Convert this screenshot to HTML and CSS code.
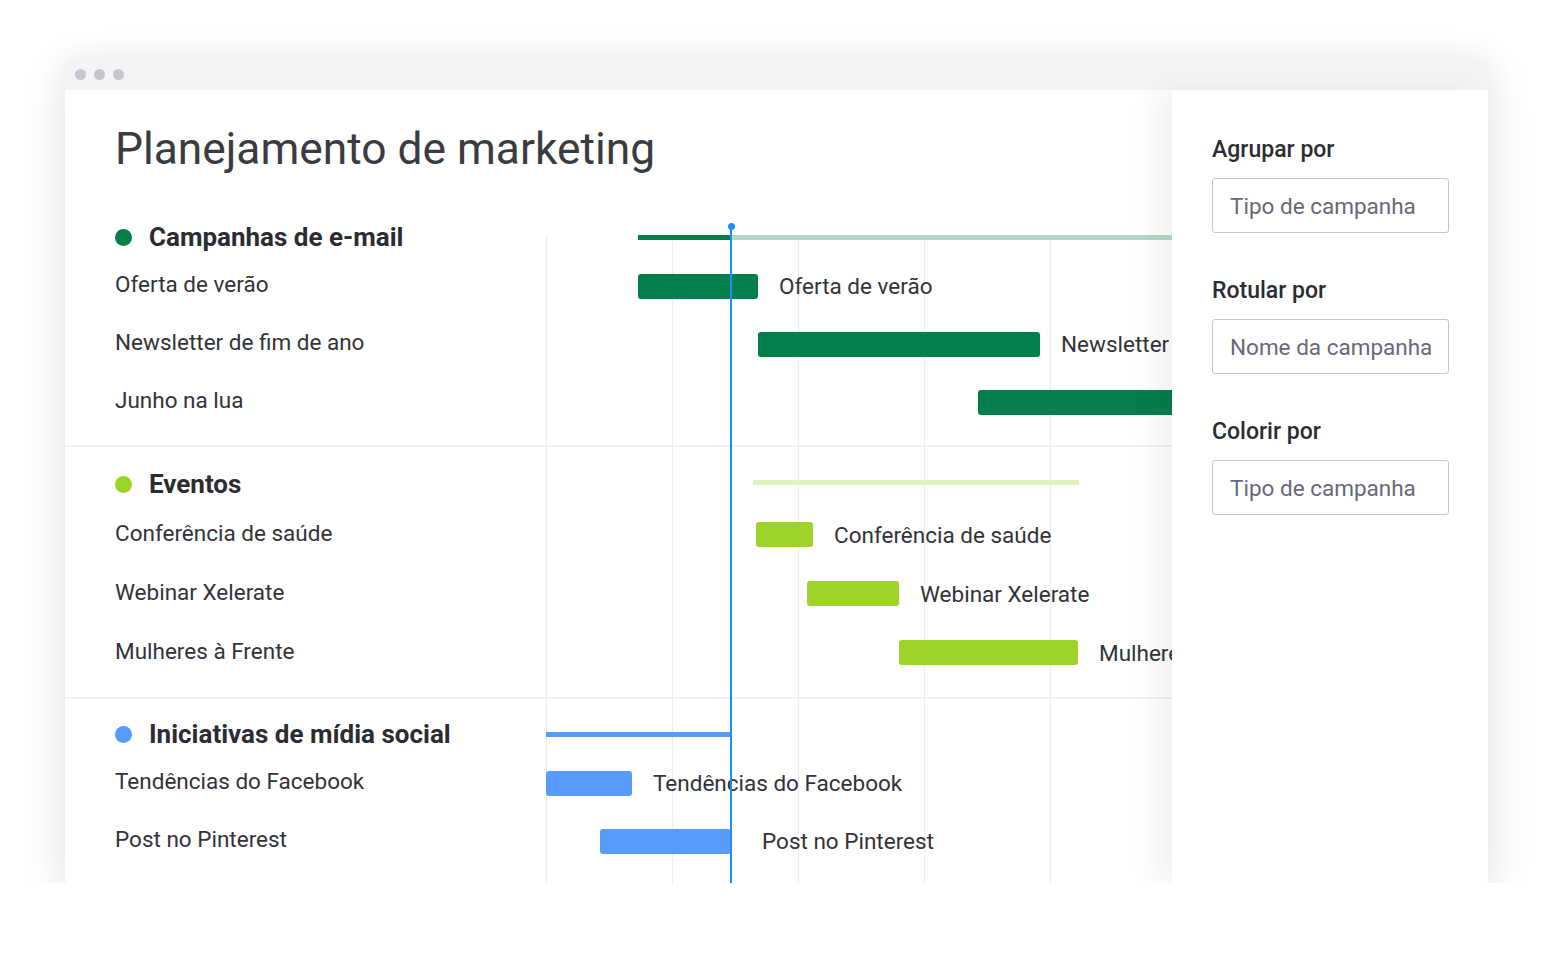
FILE: index.html
```html
<!DOCTYPE html>
<html lang="pt">
<head>
<meta charset="utf-8">
<title>Planejamento de marketing</title>
<link rel="stylesheet" href="styles.css">
</head>
<body>
<div class="card">
  <div class="topbar"><span class="wdot"></span><span class="wdot"></span><span class="wdot"></span></div>
  <div class="body">
    <main class="main">
      <h1 class="title">Planejamento de marketing</h1>
      <div class="chart">
        <div class="grid"></div>
        <div class="today"></div>

        <section class="group g-email">
          <div class="row header">
            <div class="name"><span class="gdot c-green"></span>Campanhas de e-mail</div>
            <div class="track">
              <div class="summary" style="margin-left:92px">
                <span class="seg c-green" style="width:93px"></span><span class="seg c-green-light" style="width:460px"></span>
              </div>
            </div>
          </div>
          <div class="row item">
            <div class="name">Oferta de verão</div>
            <div class="track"><div class="task" style="margin-left:92px"><span class="bar c-green" style="width:120px"></span><span class="tlabel">Oferta de verão</span></div></div>
          </div>
          <div class="row item">
            <div class="name">Newsletter de fim de ano</div>
            <div class="track"><div class="task" style="margin-left:212px"><span class="bar c-green" style="width:282px"></span><span class="tlabel">Newsletter de fim de ano</span></div></div>
          </div>
          <div class="row item">
            <div class="name">Junho na lua</div>
            <div class="track"><div class="task" style="margin-left:432px"><span class="bar c-green" style="width:250px"></span><span class="tlabel">Junho na lua</span></div></div>
          </div>
        </section>

        <section class="group g-events">
          <div class="row header">
            <div class="name"><span class="gdot c-lime"></span>Eventos</div>
            <div class="track">
              <div class="summary" style="margin-left:207px">
                <span class="seg c-lime-light" style="width:326px"></span>
              </div>
            </div>
          </div>
          <div class="row item">
            <div class="name">Conferência de saúde</div>
            <div class="track"><div class="task" style="margin-left:210px"><span class="bar c-lime" style="width:57px"></span><span class="tlabel">Conferência de saúde</span></div></div>
          </div>
          <div class="row item">
            <div class="name">Webinar Xelerate</div>
            <div class="track"><div class="task" style="margin-left:261px"><span class="bar c-lime" style="width:92px"></span><span class="tlabel">Webinar Xelerate</span></div></div>
          </div>
          <div class="row item">
            <div class="name">Mulheres à Frente</div>
            <div class="track"><div class="task" style="margin-left:353px"><span class="bar c-lime" style="width:179px"></span><span class="tlabel">Mulheres à Frente</span></div></div>
          </div>
        </section>

        <section class="group g-social">
          <div class="row header">
            <div class="name"><span class="gdot c-blue"></span>Iniciativas de mídia social</div>
            <div class="track">
              <div class="summary" style="margin-left:0px">
                <span class="seg c-blue" style="width:185px"></span>
              </div>
            </div>
          </div>
          <div class="row item">
            <div class="name">Tendências do Facebook</div>
            <div class="track"><div class="task" style="margin-left:0px"><span class="bar c-blue" style="width:86px"></span><span class="tlabel">Tendências do Facebook</span></div></div>
          </div>
          <div class="row item">
            <div class="name">Post no Pinterest</div>
            <div class="track"><div class="task" style="margin-left:54px"><span class="bar c-blue" style="width:131px"></span><span class="tlabel after-today">Post no Pinterest</span></div></div>
          </div>
        </section>
      </div>
    </main>

    <aside class="panel">
      <div class="field">
        <div class="flabel">Agrupar por</div>
        <div class="finput">Tipo de campanha</div>
      </div>
      <div class="field">
        <div class="flabel">Rotular por</div>
        <div class="finput">Nome da campanha</div>
      </div>
      <div class="field">
        <div class="flabel">Colorir por</div>
        <div class="finput">Tipo de campanha</div>
      </div>
    </aside>
  </div>
</div>
</body>
</html>
```

FILE: styles.css
```css
* { box-sizing: border-box; }

html, body {
  margin: 0;
  padding: 0;
  background: #ffffff;
  font-family: Roboto, "Noto Sans", "Liberation Sans", sans-serif;
  color: #323338;
}

body {
  padding: 58px 0 0 65px;
}

.card {
  width: 1423px;
  height: 825px;
  background: #ffffff;
  border-radius: 4px;
  box-shadow: 0 14px 50px rgba(0, 0, 0, 0.09), 0 0 30px rgba(0, 0, 0, 0.05);
  display: flex;
  flex-direction: column;
  overflow: hidden;
}

.topbar {
  height: 32px;
  flex: 0 0 32px;
  background: #f4f4f6;
  display: flex;
  align-items: center;
  gap: 8px;
  padding-left: 10px;
}

.wdot {
  width: 11px;
  height: 11px;
  border-radius: 50%;
  background: #c5c7d0;
}

.body {
  flex: 1;
  display: flex;
  min-height: 0;
}

.main {
  flex: 1;
  min-width: 0;
  overflow: hidden;
  position: relative;
}

.title {
  margin: 33px 0 0 50px;
  font-size: 44.3px;
  line-height: 52px;
  font-weight: 400;
  color: #3a3b41;
}

.chart {
  position: relative;
  margin-top: 42px;
}

.grid {
  position: absolute;
  left: 481px;
  right: 0;
  top: 18px;
  bottom: -40px;
  background: repeating-linear-gradient(to right, #ececef 0 1px, transparent 1px 126px);
  z-index: 0;
}

.today {
  position: absolute;
  left: 665px;
  top: 9px;
  bottom: -40px;
  width: 2px;
  background: #1f8cff;
  z-index: 3;
}

.today::before {
  content: "";
  position: absolute;
  left: -2.5px;
  top: -3px;
  width: 7px;
  height: 7px;
  border-radius: 50%;
  background: #1f8cff;
}

.group {
  position: relative;
  z-index: 1;
  border-bottom: 2px solid #f1f1f3;
}

.g-email { padding: 0 0 14px; }
.g-events { padding: 14px 0 15px; }
.g-social { padding: 15px 0 0; border-bottom: none; }

.row {
  display: flex;
  align-items: center;
}

.row.header { height: 40px; }
.row.item { height: 58px; }
.g-events .row.header { height: 44px; }
.g-events .row.item { height: 59px; }

.name {
  flex: 0 0 481px;
  padding-left: 50px;
  display: flex;
  align-items: center;
  font-size: 22.5px;
  color: #323338;
  white-space: nowrap;
}

.header .name {
  font-size: 26px;
  font-weight: 700;
  color: #2b2c32;
}

.g-events .header .name { margin-top: 2px; }

.item .name {
  margin-top: -4px;
}

.gdot {
  width: 17px;
  height: 17px;
  border-radius: 50%;
  margin-right: 17px;
  flex: 0 0 17px;
}

.track {
  flex: 1;
  display: flex;
  align-items: center;
  white-space: nowrap;
}

.summary {
  display: flex;
  height: 5px;
}

.g-events .summary { margin-top: -2px; }

.seg { display: block; height: 5px; }

.task {
  display: flex;
  align-items: center;
  gap: 21px;
}

.bar {
  display: block;
  height: 25px;
  border-radius: 3px;
  flex: 0 0 auto;
}

.tlabel {
  font-size: 22.5px;
  color: #323338;
  white-space: nowrap;
}

.tlabel.after-today { margin-left: 10px; }

.c-green { background: #037f4c; }
.c-green-light { background: #b3d8c7; }
.c-lime { background: #9cd326; }
.c-lime-light { background: #e1f2bd; }
.c-blue { background: #579bfc; }

.panel {
  flex: 0 0 316px;
  background: #ffffff;
  position: relative;
  z-index: 5;
  box-shadow: -16px 0 28px rgba(0, 0, 0, 0.055);
  padding: 46px 0 0 40px;
}

.field {
  margin-bottom: 44px;
}

.flabel {
  font-size: 23px;
  line-height: 28px;
  font-weight: 500;
  color: #2b2c32;
  margin-bottom: 14px;
}

.finput {
  width: 237px;
  height: 55px;
  border: 1px solid #c5c7d0;
  border-radius: 3px;
  padding-left: 17px;
  display: flex;
  align-items: center;
  font-size: 22.5px;
  color: #676879;
}
```
